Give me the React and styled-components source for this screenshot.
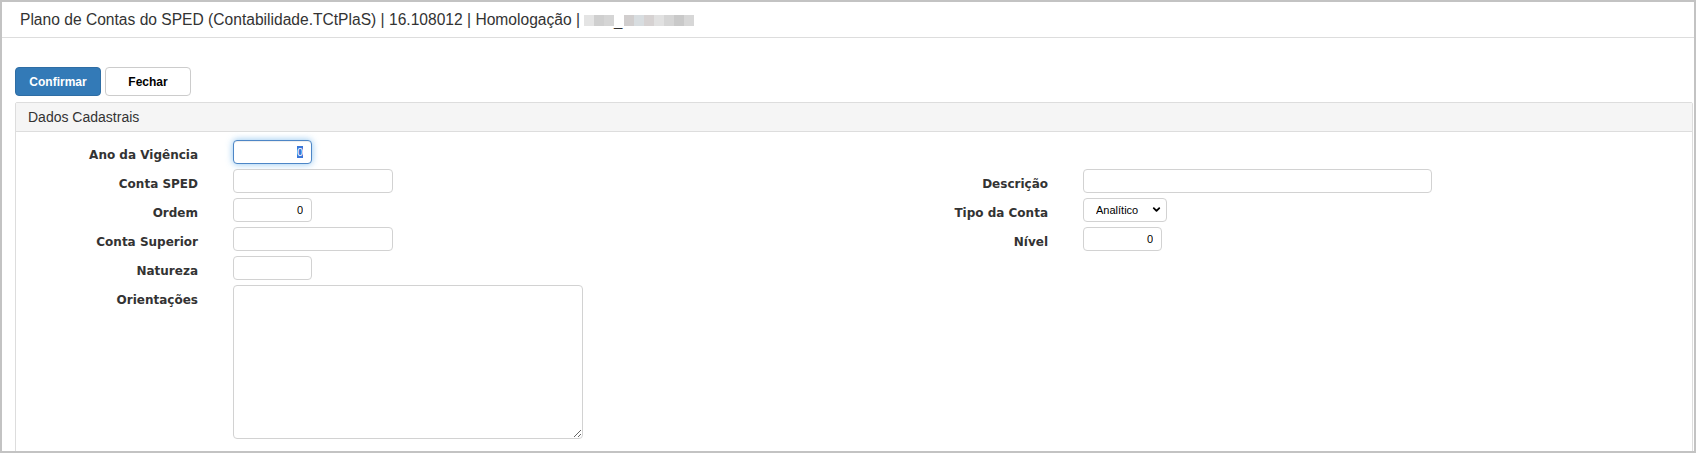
import { useEffect, useRef } from 'react'
import styled, { createGlobalStyle } from 'styled-components'
import { ChevronDown } from 'lucide-react'

const GlobalStyle = createGlobalStyle`
  html, body {
    margin: 0;
    padding: 0;
    background: #ffffff;
  }
  * {
    box-sizing: border-box;
  }
`

const redactTiles = ['#e4e4e4', '#cfcfcf', '#d5d5d5', null, '#d1cece', '#d8dde0', '#d6d2d2', '#e1e1e1', '#d5d5d5', '#c9c9c9', '#d7d7d7']

const App = () => {
  const yearRef = useRef(null)

  useEffect(() => {
    if (yearRef.current) {
      yearRef.current.focus()
      yearRef.current.select()
    }
  }, [])

  return (
    <>
      <GlobalStyle />
      <Frame>
        <TitleBar>
          <TitleText>Plano de Contas do SPED (Contabilidade.TCtPlaS) | 16.108012 | Homologação |</TitleText>
          <Redacted>
            {redactTiles.map((c, i) =>
              c ? <Tile key={i} $color={c} /> : <Underscore key={i}>_</Underscore>
            )}
          </Redacted>
        </TitleBar>

        <Toolbar>
          <Button $primary>Confirmar</Button>
          <Button>Fechar</Button>
        </Toolbar>

        <Panel>
          <PanelHeader>Dados Cadastrais</PanelHeader>
          <PanelBody>
            <FormRow>
              <Label>Ano da Vigência</Label>
              <Control>
                <TextInput ref={yearRef} $w={79} $align="right" $focused defaultValue="0" />
              </Control>
            </FormRow>
            <FormRow>
              <Label>Conta SPED</Label>
              <Control>
                <TextInput $w={160} />
              </Control>
              <Label>Descrição</Label>
              <Control>
                <TextInput $w={349} />
              </Control>
            </FormRow>
            <FormRow>
              <Label>Ordem</Label>
              <Control>
                <TextInput $w={79} $align="right" defaultValue="0" />
              </Control>
              <Label>Tipo da Conta</Label>
              <Control>
                <SelectWrap>
                  <Select defaultValue="A">
                    <option value="A">Analítico</option>
                    <option value="S">Sintético</option>
                  </Select>
                  <SelectArrow>
                    <ChevronDown size={11} strokeWidth={4} />
                  </SelectArrow>
                </SelectWrap>
              </Control>
            </FormRow>
            <FormRow>
              <Label>Conta Superior</Label>
              <Control>
                <TextInput $w={160} />
              </Control>
              <Label>Nível</Label>
              <Control>
                <TextInput $w={79} $align="right" defaultValue="0" />
              </Control>
            </FormRow>
            <FormRow>
              <Label>Natureza</Label>
              <Control>
                <TextInput $w={79} />
              </Control>
            </FormRow>
            <FormRow>
              <Label>Orientações</Label>
              <Control>
                <TextArea />
              </Control>
            </FormRow>
          </PanelBody>
        </Panel>
      </Frame>
    </>
  )
}
export default App

const Frame = styled.div`
  width: 1696px;
  height: 453px;
  border: 2px solid #c3c3c3;
  overflow: hidden;
  background: #fff;
`
const TitleBar = styled.div`
  display: flex;
  align-items: center;
  height: 36px;
  padding: 1px 0 0 18px;
  border-bottom: 1px solid #dddddd;
`
const TitleText = styled.span`
  font-family: "Liberation Sans", Arial, sans-serif;
  font-size: 15.6px;
  color: #333;
  white-space: pre;
`
const Redacted = styled.span`
  display: flex;
  align-items: stretch;
  height: 11px;
  margin-left: 4px;
  margin-top: 1px;
`
const Tile = styled.span`
  width: 10px;
  background: ${p => p.$color};
`
const Underscore = styled.span`
  width: 10px;
  font-family: "Liberation Sans", Arial, sans-serif;
  font-size: 15px;
  line-height: 11px;
  color: #333;
`
const Toolbar = styled.div`
  display: flex;
  gap: 4px;
  padding: 29px 0 0 13px;
`
const Button = styled.button`
  width: 86px;
  height: 29px;
  padding: 0;
  border-radius: 4px;
  border: 1px solid ${p => (p.$primary ? '#2e6da4' : '#cccccc')};
  background: ${p => (p.$primary ? '#337ab7' : '#ffffff')};
  color: ${p => (p.$primary ? '#ffffff' : '#000000')};
  font-family: "Liberation Sans", Arial, sans-serif;
  font-size: 12px;
  font-weight: bold;
  cursor: pointer;
`
const Panel = styled.div`
  margin: 6px 1px 0 13px;
  border: 1px solid #dddddd;
  border-radius: 2px 2px 0 0;
`
const PanelHeader = styled.div`
  height: 29px;
  padding: 0 12px;
  display: flex;
  align-items: center;
  background: #f5f5f5;
  border-bottom: 1px solid #dddddd;
  font-family: "Liberation Sans", Arial, sans-serif;
  font-size: 14px;
  color: #333;
`
const PanelBody = styled.div`
  display: flex;
  flex-direction: column;
  gap: 5px;
  padding: 8px 0 20px;
`
const FormRow = styled.div`
  display: grid;
  grid-template-columns: 182px 589px 191px 1fr;
  column-gap: 35px;
  align-items: start;
`
const Label = styled.label`
  height: 24px;
  line-height: 24px;
  padding-top: 3px;
  text-align: right;
  font-family: "DejaVu Sans", Verdana, sans-serif;
  font-size: 12px;
  font-weight: bold;
  color: #333;
  white-space: nowrap;
`
const Control = styled.div`
  display: flex;
`
const TextInput = styled.input`
  width: ${p => p.$w}px;
  height: 24px;
  padding: 0 8px;
  border-radius: 4px;
  border: 1px solid ${p => (p.$focused ? '#4d86c6' : '#d2d2d2')};
  box-shadow: ${p => (p.$focused ? 'inset 0 1px 1px rgba(0,0,0,.075), 0 0 7px rgba(102,175,233,.75)' : 'none')};
  text-align: ${p => p.$align || 'left'};
  font-family: "Liberation Sans", Arial, sans-serif;
  font-size: 11px;
  color: #000;
  background: #fff;
  outline: none;
  &::selection {
    background: #3a76d8;
    color: #fff;
  }
`
const SelectWrap = styled.div`
  position: relative;
  width: 84px;
  height: 24px;
`
const Select = styled.select`
  appearance: none;
  width: 100%;
  height: 100%;
  padding: 0 0 0 12px;
  border-radius: 4px;
  border: 1px solid #d2d2d2;
  background: #fff;
  font-family: "Liberation Sans", Arial, sans-serif;
  font-size: 11px;
  color: #000;
  outline: none;
`
const SelectArrow = styled.span`
  position: absolute;
  right: 5px;
  top: 6px;
  display: flex;
  color: #000;
  pointer-events: none;
`
const TextArea = styled.textarea`
  width: 350px;
  height: 154px;
  border-radius: 4px;
  border: 1px solid #d2d2d2;
  padding: 4px 6px;
  font-family: "Liberation Sans", Arial, sans-serif;
  font-size: 11px;
  outline: none;
`
